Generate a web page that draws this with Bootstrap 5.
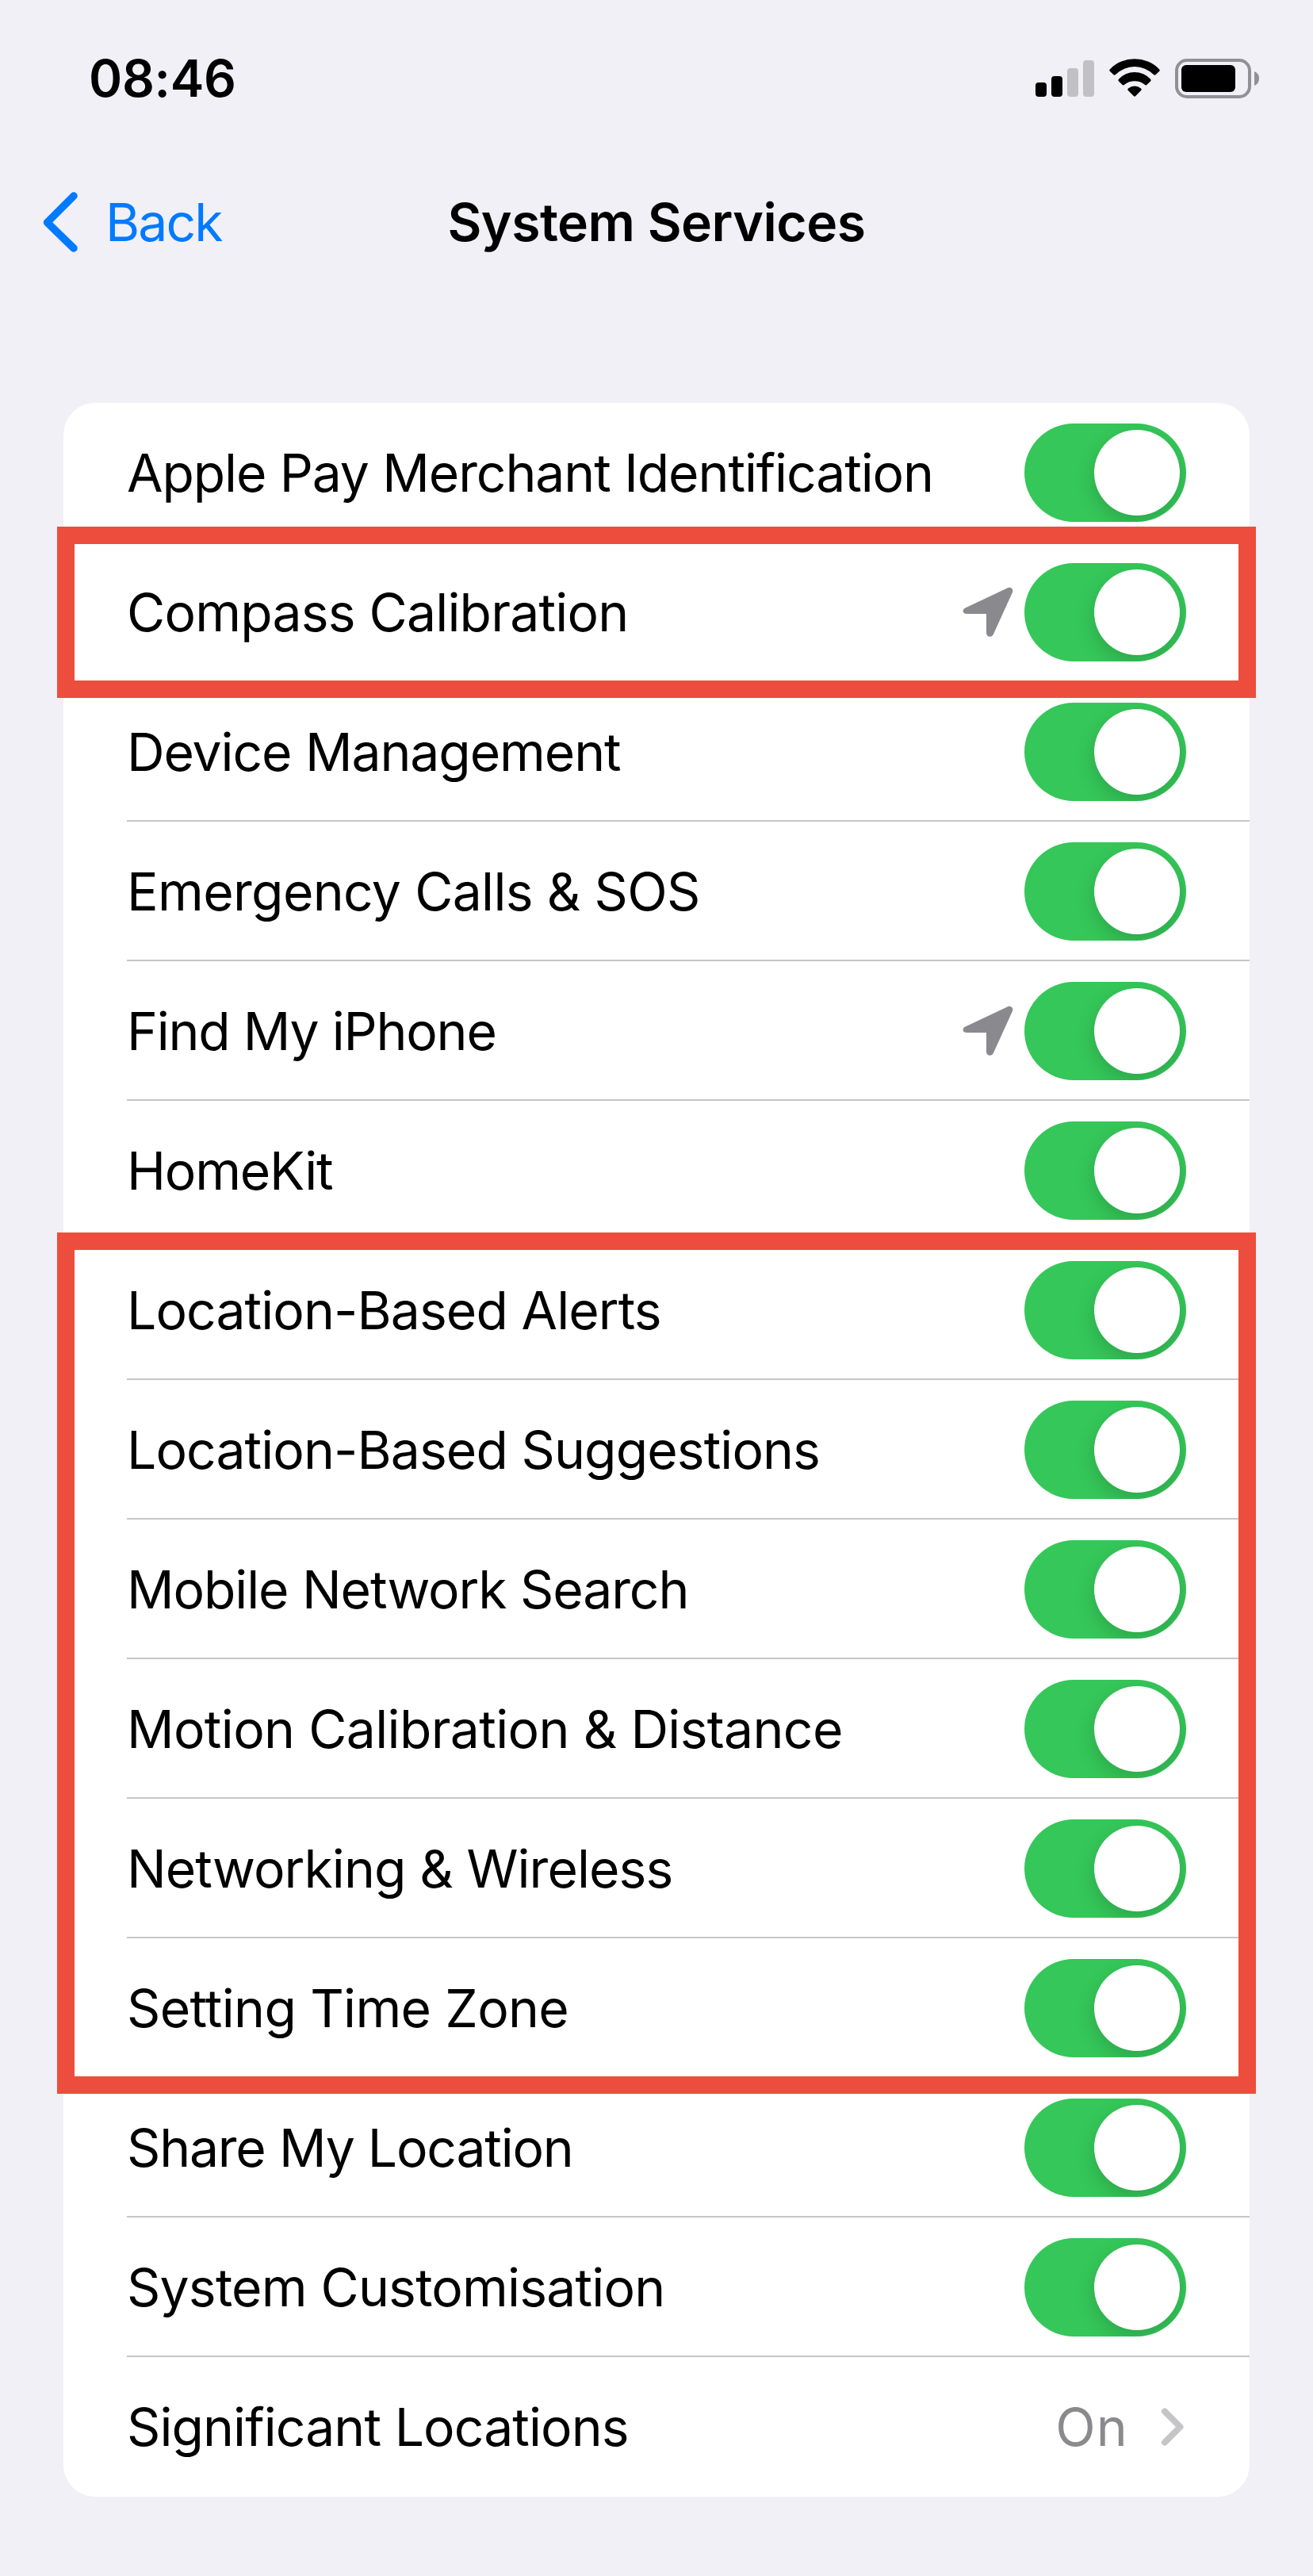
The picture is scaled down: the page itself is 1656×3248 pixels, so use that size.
<!DOCTYPE html>
<html lang="en">
<head>
<meta charset="utf-8">
<meta name="viewport" content="width=device-width, initial-scale=1">
<title>System Services</title>
<link href="https://cdn.jsdelivr.net/npm/bootstrap@5.3.0/dist/css/bootstrap.min.css" rel="stylesheet">
<style>
  body { background: #f1f0f6; color: #000; font-family: Inter, "Liberation Sans", sans-serif; font-size: 66px; line-height: 80px; min-height: 3248px; }
  .status-bar { height: 198px; padding: 0 68px 0 112px; }
  .clock { font-size: 64px; font-weight: 600; letter-spacing: -.3px; }
  .nav-bar { height: 164px; padding: 0 54px; }
  .nav-side { flex: 1 1 0; }
  .back-link { color: #007aff; letter-spacing: -1.9px; gap: 35px; }
  .nav-title { font-size: 66px; line-height: 80px; font-weight: 600; letter-spacing: -.5px; }
  .settings { margin: 146px 80px 0; }
  .settings .list-group { --bs-list-group-bg: #fff; --bs-list-group-border-width: 0; --bs-list-group-border-radius: 40px; background: #fff; border-radius: 40px; }
  .settings .list-group-item { height: 176px; padding: 0 0 0 80px; color: #000; background: transparent; }
  .row-body { height: 176px; padding-right: 80px; box-shadow: inset 0 -2px #c6c6c8; }
  .list-group-item:last-child .row-body { box-shadow: none; padding-right: 83px; }
  .row-label { letter-spacing: var(--track, -.92px); white-space: nowrap; }
  .tight { --track: -1.1px; }
  .tighter { --track: -1.22px; }
  .loose { --track: -.66px; }
  .mid { --track: -.8px; }
  .toggle { width: 204px; height: 124px; padding: 8px; background: #35c759; overflow: hidden; }
  .knob { width: 108px; height: 108px; background: #fff; box-shadow: 0 9px 24px rgba(0, 0, 0, .17); }
  .arrow { margin-right: 14px; }
  .row-value { color: #8a8a8e; letter-spacing: 1.2px; margin-right: 41px; }
  .marker { left: -8px; width: 1512px; border: 22px solid #ed4d3d; z-index: 2; pointer-events: none; }
  .marker-one { top: 156px; height: 216px; }
  .marker-two { top: 1046px; height: 1086px; }
</style>
</head>
<body>
<svg class="d-none" xmlns="http://www.w3.org/2000/svg">
  <symbol id="location" viewBox="0 0 64 64">
    <path d="M3.500 26.500 57 1.300C61 -.4 64.600 2.800 62.900 7L39 59.500C36.800 64.500 30 63.500 30 58V34H5.500C-.5 34 -.8 28.600 3.500 26.500Z" fill="#8a8a8e"/>
  </symbol>
</svg>

<header>
  <div class="status-bar d-flex align-items-center justify-content-between">
    <span class="clock">08:46</span>
    <svg width="282" height="50" viewBox="0 0 282 50" aria-hidden="true">
      <rect x="0" y="30" width="14" height="18" rx="4"/>
      <rect x="20" y="22" width="14" height="26" rx="4"/>
      <rect x="40" y="12" width="14" height="36" rx="4" fill="#c1c0c5"/>
      <rect x="60" y="2" width="14" height="46" rx="4" fill="#c1c0c5"/>
      <g transform="translate(93)">
        <path d="M1 13.200A43.600 43.600 0 0 1 63 13.200Q64.500 14.500 63 16L58.500 20.200Q57.500 21.200 56 20A34 34 0 0 0 8 20Q6.500 21.200 5.500 20.200L1 16Q-.5 14.500 1 13.200Z"/>
        <path d="M12 25.800A27 27 0 0 1 52 25.800Q53.500 27.200 52 28.600L47.300 33Q46.200 34 44.800 32.800A20.600 20.600 0 0 0 19.200 32.800Q17.800 34 16.700 33L12 28.600Q10.500 27.200 12 25.800Z"/>
        <path d="M24 37.400A12.500 12.500 0 0 1 40 37.400Q41.600 38.600 40.200 40L33 47.300Q32 48.200 31 47.300L23.800 40Q22.400 38.600 24 37.400Z"/>
      </g>
      <rect x="178" y="2" width="92" height="46" rx="13" fill="none" stroke="#919096" stroke-width="4"/>
      <rect x="184" y="8" width="68" height="34" rx="6"/>
      <path d="M276 16Q282 18.500 282 25T276 34Z" fill="#919096"/>
    </svg>
  </div>
  <nav class="nav-bar d-flex align-items-center">
    <div class="nav-side d-flex">
      <a href="#" class="back-link d-flex align-items-center text-decoration-none">
        <svg width="44" height="76" viewBox="0 0 44 76" aria-hidden="true"><path d="M39 5 5.500 38.500 39 71" fill="none" stroke="#007aff" stroke-width="9.500" stroke-linecap="round" stroke-linejoin="round"/></svg>
        <span>Back</span>
      </a>
    </div>
    <h1 class="nav-title m-0">System Services</h1>
    <div class="nav-side"></div>
  </nav>
</header>

<main class="settings position-relative">
  <ul class="list-group">
    <li class="list-group-item"><div class="row-body d-flex align-items-center"><span class="row-label tight me-auto">Apple Pay Merchant Identification</span><span class="toggle rounded-pill d-flex justify-content-end" role="switch" aria-checked="true"><span class="knob rounded-circle"></span></span></div></li>
    <li class="list-group-item"><div class="row-body d-flex align-items-center"><span class="row-label mid me-auto">Compass Calibration</span><svg class="arrow" width="64" height="64"><use href="#location"/></svg><span class="toggle rounded-pill d-flex justify-content-end" role="switch" aria-checked="true"><span class="knob rounded-circle"></span></span></div></li>
    <li class="list-group-item"><div class="row-body d-flex align-items-center"><span class="row-label tight me-auto">Device Management</span><span class="toggle rounded-pill d-flex justify-content-end" role="switch" aria-checked="true"><span class="knob rounded-circle"></span></span></div></li>
    <li class="list-group-item"><div class="row-body d-flex align-items-center"><span class="row-label loose me-auto">Emergency Calls &amp; SOS</span><span class="toggle rounded-pill d-flex justify-content-end" role="switch" aria-checked="true"><span class="knob rounded-circle"></span></span></div></li>
    <li class="list-group-item"><div class="row-body d-flex align-items-center"><span class="row-label tighter me-auto">Find My iPhone</span><svg class="arrow" width="64" height="64"><use href="#location"/></svg><span class="toggle rounded-pill d-flex justify-content-end" role="switch" aria-checked="true"><span class="knob rounded-circle"></span></span></div></li>
    <li class="list-group-item"><div class="row-body d-flex align-items-center"><span class="row-label tighter me-auto">HomeKit</span><span class="toggle rounded-pill d-flex justify-content-end" role="switch" aria-checked="true"><span class="knob rounded-circle"></span></span></div></li>
    <li class="list-group-item"><div class="row-body d-flex align-items-center"><span class="row-label me-auto">Location-Based Alerts</span><span class="toggle rounded-pill d-flex justify-content-end" role="switch" aria-checked="true"><span class="knob rounded-circle"></span></span></div></li>
    <li class="list-group-item"><div class="row-body d-flex align-items-center"><span class="row-label me-auto">Location-Based Suggestions</span><span class="toggle rounded-pill d-flex justify-content-end" role="switch" aria-checked="true"><span class="knob rounded-circle"></span></span></div></li>
    <li class="list-group-item"><div class="row-body d-flex align-items-center"><span class="row-label tight me-auto">Mobile Network Search</span><span class="toggle rounded-pill d-flex justify-content-end" role="switch" aria-checked="true"><span class="knob rounded-circle"></span></span></div></li>
    <li class="list-group-item"><div class="row-body d-flex align-items-center"><span class="row-label loose me-auto">Motion Calibration &amp; Distance</span><span class="toggle rounded-pill d-flex justify-content-end" role="switch" aria-checked="true"><span class="knob rounded-circle"></span></span></div></li>
    <li class="list-group-item"><div class="row-body d-flex align-items-center"><span class="row-label me-auto">Networking &amp; Wireless</span><span class="toggle rounded-pill d-flex justify-content-end" role="switch" aria-checked="true"><span class="knob rounded-circle"></span></span></div></li>
    <li class="list-group-item"><div class="row-body d-flex align-items-center"><span class="row-label loose me-auto">Setting Time Zone</span><span class="toggle rounded-pill d-flex justify-content-end" role="switch" aria-checked="true"><span class="knob rounded-circle"></span></span></div></li>
    <li class="list-group-item"><div class="row-body d-flex align-items-center"><span class="row-label tighter me-auto">Share My Location</span><span class="toggle rounded-pill d-flex justify-content-end" role="switch" aria-checked="true"><span class="knob rounded-circle"></span></span></div></li>
    <li class="list-group-item"><div class="row-body d-flex align-items-center"><span class="row-label mid me-auto">System Customisation</span><span class="toggle rounded-pill d-flex justify-content-end" role="switch" aria-checked="true"><span class="knob rounded-circle"></span></span></div></li>
    <li class="list-group-item"><div class="row-body d-flex align-items-center"><span class="row-label me-auto">Significant Locations</span><span class="row-value">On</span><svg width="29" height="48" viewBox="0 0 29 48" aria-hidden="true"><path d="M5 4.500 24.500 24 5 43.500" fill="none" stroke="#c5c5c7" stroke-width="8" stroke-linecap="round" stroke-linejoin="round"/></svg></div></li>
  </ul>
  <div class="marker marker-one position-absolute"></div>
  <div class="marker marker-two position-absolute"></div>
</main>
<script src="https://cdn.jsdelivr.net/npm/bootstrap@5.3.0/dist/js/bootstrap.bundle.min.js"></script>
</body>
</html>
